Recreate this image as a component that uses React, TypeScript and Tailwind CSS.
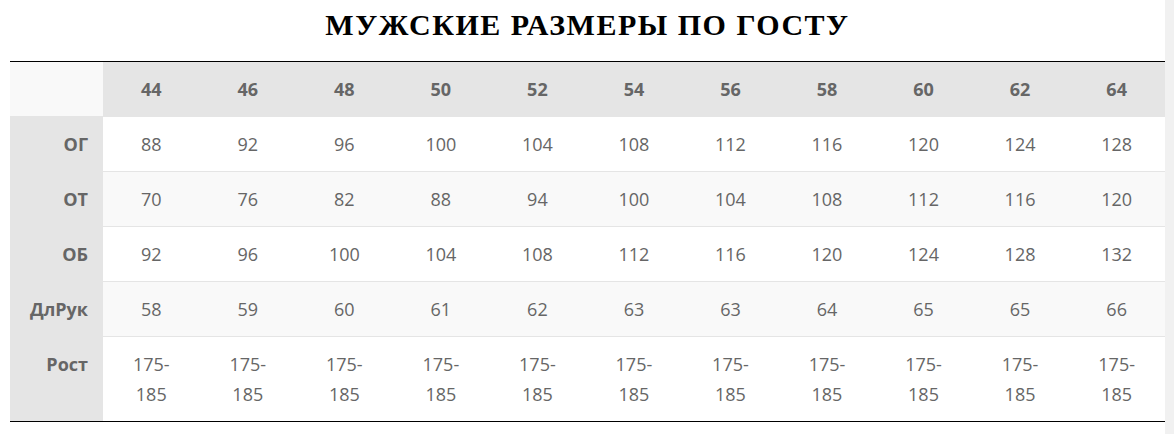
const sizes = ["44", "46", "48", "50", "52", "54", "56", "58", "60", "62", "64"];

const rows: { label: string; values: string[] }[] = [
	{ label: "ОГ", values: ["88", "92", "96", "100", "104", "108", "112", "116", "120", "124", "128"] },
	{ label: "ОТ", values: ["70", "76", "82", "88", "94", "100", "104", "108", "112", "116", "120"] },
	{ label: "ОБ", values: ["92", "96", "100", "104", "108", "112", "116", "120", "124", "128", "132"] },
	{ label: "ДлРук", values: ["58", "59", "60", "61", "62", "63", "63", "64", "65", "65", "66"] },
	{ label: "Рост", values: Array(11).fill("175- 185") },
];

export default function App() {
	return (
		<div className="flex h-[434px] w-[1174px] bg-white">
			<div className="flex-1 pl-[10px]">
				<h2 className="flex h-[61px] items-start justify-center pt-[7px] text-[30px] leading-[36px] font-bold tracking-[1.5px] text-black [font-family:'Liberation_Serif',serif]">
					МУЖСКИЕ РАЗМЕРЫ ПО ГОСТУ
				</h2>
				<table className="w-[1155px] table-fixed border-collapse border-y border-black text-[18px] leading-[30px] text-[#666] [font-family:'Open_Sans',sans-serif]">
					<colgroup>
						<col className="w-[93px]" />
						{sizes.map((s) => (
							<col key={s} />
						))}
					</colgroup>
					<thead>
						<tr className="h-[55px] bg-[#e5e5e5]">
							<th className="bg-[#f9f9f9]" />
							{sizes.map((s) => (
								<th key={s} className="text-center font-bold">
									{s}
								</th>
							))}
						</tr>
					</thead>
					<tbody>
						{rows.map((row, i) => (
							<tr
								key={row.label}
								className={`border-t border-[#e5e5e5] ${i % 2 === 1 ? "bg-[#f9f9f9]" : "bg-white"}`}
							>
								<th className="bg-[#e5e5e5] pr-[15px] text-right align-top py-[12px] font-bold">
									{row.label}
								</th>
								{row.values.map((v, j) => (
									<td key={j} className="px-[20px] py-[12px] text-center align-top">
										{v}
									</td>
								))}
							</tr>
						))}
					</tbody>
				</table>
			</div>
			<div className="w-[9px] bg-[#f1f1f1]" />
		</div>
	);
}
